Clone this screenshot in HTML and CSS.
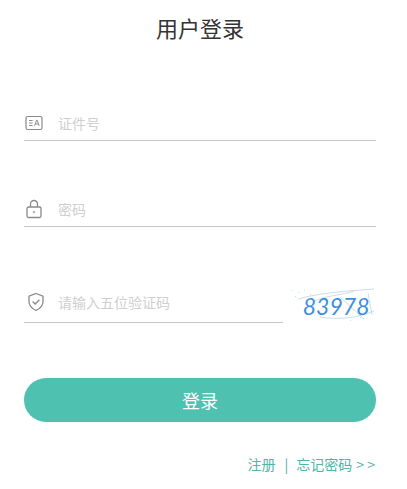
FILE: index.html
```html
<!DOCTYPE html>
<html lang="zh">
<head>
<meta charset="utf-8">
<title>用户登录</title>
<link rel="stylesheet" href="styles.css">
</head>
<body>
<main class="page">
  <h1 class="title">用户登录</h1>
  <div class="field field-id">
    <svg class="icon" width="18" height="16" viewBox="0 0 18 16" fill="none" stroke="#8a8a8a" stroke-width="1.2"><rect x="1" y="1.500" width="16" height="13" rx="1.500"/><path d="M4 5.500h3.600M4 8h3.600M4 10.500h3.600" stroke-width="1"/><path d="M9.600 10.800l2-5.600h.6l2 5.600M10.400 9h3.200" stroke-width="1"/></svg>
    <span class="ph">证件号</span>
  </div>
  <div class="field field-pw">
    <svg class="icon" width="18" height="20" viewBox="0 0 18 20" fill="none" stroke="#8a8a8a" stroke-width="1.3"><rect x="2" y="8" width="14" height="10.500" rx="1.500"/><path d="M5.500 8V5a3.500 3.500 0 0 1 7 0v3"/><path d="M9 12v2.200"/></svg>
    <span class="ph">密码</span>
  </div>
  <div class="captcha-row">
    <div class="field field-code">
      <svg class="icon" width="18" height="20" viewBox="0 0 18 20" fill="none" stroke="#8a8a8a" stroke-width="1.3"><path d="M9 1.500l7 2.600v5.400c0 4-3 7-7 9-4-2-7-5-7-9V4.100z"/><path d="M5.600 9.500l2.500 2.500 4.300-4.300"/></svg>
      <span class="ph">请输入五位验证码</span>
    </div>
    <div class="captcha">
      <svg class="noise" width="86" height="36" viewBox="0 0 86 36" fill="none" stroke="#b4cde2" stroke-width=".7"><path d="M8 12c20-6 50-8 76-10M24 14c14-6 30-6 40-10M30 30c18 3 38 1 54-6M50 10l24 22M78 6l4 22M2 3l1 1M8 5l1 1M14 3l1 1M20 7l1 1M5 9l1 1M60 33l1 1M70 30l1 1"/></svg>
      <span class="code">83978</span>
    </div>
  </div>
  <button class="submit" type="button">登录</button>
  <div class="links"><a>注册</a><span class="sep">|</span><a>忘记密码</a><span class="arrows">&gt; &gt;</span></div>
</main>
</body>
</html>
```
FILE: styles.css
```css
* { box-sizing: border-box; }
html, body { margin: 0; padding: 0; background: #fff; }
body { font-family: "Noto Sans CJK SC", "Noto Sans", sans-serif; }
.page { width: 407px; height: 489px; padding: 0 31px 0 24px; overflow: hidden; }
.title { margin: 0; padding-top: 10px; height: 42px; line-height: 34px; font-size: 22px; font-weight: 400; color: #333; text-align: center; }
.field { display: flex; align-items: center; border-bottom: 1px solid #c8c8c8; height: 32px; }
.field-id { margin-top: 67px; padding-bottom: 3px; }
.field-pw { margin-top: 54px; padding-bottom: 3px; }
.icon { flex: none; margin-left: 1px; }
.ph { margin-left: 15px; font-size: 14px; color: #cfcfcf; white-space: nowrap; }
.captcha-row { display: flex; align-items: flex-start; margin-top: 60px; }
.field-code { width: 260px; height: 36px; padding-bottom: 5px; }
.field-code .icon { margin-left: 3px; }
.field-code .ph { margin-left: 13px; }
.captcha { position: relative; width: 86px; height: 36px; margin-left: 7px; padding-left: 6px; display: flex; align-items: center; justify-content: center; }
.noise { position: absolute; left: 0; top: 0; }
.code { position: relative; top: 1px; font-family: "Lato", sans-serif; font-style: italic; font-size: 23px; letter-spacing: 0; color: #3f8fe0; }
.submit { display: block; width: 352px; height: 44px; margin-top: 55px; border: 0; border-radius: 22px; background: #4fc1b0; color: #fff; font: 400 18px "Noto Sans CJK SC", sans-serif; }
.links { display: flex; justify-content: flex-end; align-items: center; margin-top: 31px; font-size: 14px; color: #4fb5a6; line-height: 22px; }
.sep { margin: 0 8px 0 9px; color: #4fa7a0; }
.arrows { margin-left: 4px; padding-right: 1px; }
```
